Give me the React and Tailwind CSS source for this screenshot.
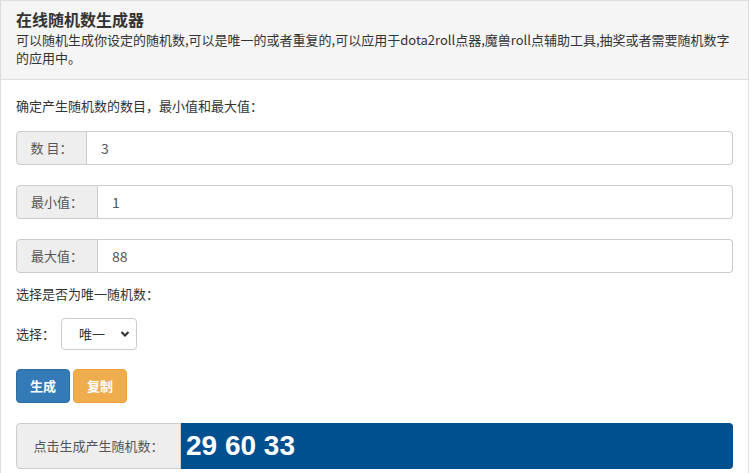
import React, { useState } from 'react';

const font = { fontFamily: '"Noto Sans CJK SC", "Noto Sans", sans-serif' };

function InputRow({ label, value, addonW }) {
  return (
    <div className="flex h-[34px] text-[13px]">
      <span className={`${addonW} flex items-center justify-center rounded-l border border-[#cccccc] bg-[#eeeeee] text-[#555555]`}>{label}</span>
      <input
        defaultValue={value}
        className="flex-1 rounded-r border border-l-0 border-[#cccccc] px-[14px] text-[14px] text-[#555555] outline-none"
        style={font}
      />
    </div>
  );
}

export default function App() {
  const [result] = useState('29 60 33');
  return (
    <div className="h-[473px] w-[749px] overflow-hidden border border-b-0 border-[#dddddd] bg-white text-[#333333]" style={font}>
      <div className="h-[79px] border-b border-[#dddddd] bg-[#f5f5f5] px-[15px] pt-[6px]">
        <h1 className="text-[16px] font-bold leading-[24px] text-[#333333]">在线随机数生成器</h1>
        <p className="text-[13px] leading-[18px] text-[#333333]">
          可以随机生成你设定的随机数,可以是唯一的或者重复的,可以应用于dota2roll点器,魔兽roll点辅助工具,抽奖或者需要随机数字的应用中。
        </p>
      </div>
      <div className="px-[15px] pt-[16px]">
        <p className="text-[13px] leading-[20px]">确定产生随机数的数目，最小值和最大值：</p>
        <div className="mt-[15px] flex flex-col gap-[20px]">
          <InputRow label="数 目：" value="3" addonW="w-[71px]" />
          <InputRow label="最小值：" value="1" addonW="w-[82px]" />
          <InputRow label="最大值：" value="88" addonW="w-[82px]" />
        </div>
        <p className="mt-[11px] text-[13px] leading-[20px]">选择是否为唯一随机数：</p>
        <div className="mt-[14px] flex items-center gap-[6px] text-[13px]">
          <span>选择：</span>
          <div className="relative flex h-[32px] w-[76px] items-center rounded border border-[#cccccc] pl-[17px]">
            <span>唯一</span>
            <svg className="absolute right-[6px] top-[11px]" width="10" height="8" viewBox="0 0 10 8">
              <path d="M1.5 2 L5 5.5 L8.5 2" fill="none" stroke="#333" strokeWidth="2.2" />
            </svg>
          </div>
        </div>
        <div className="mt-[19px] flex gap-[3px] text-[13px] font-semibold text-white">
          <button className="h-[34px] w-[54px] rounded border border-[#2e6da4] bg-[#337ab7]" style={font}>生成</button>
          <button className="h-[34px] w-[54px] rounded border border-[#eea236] bg-[#f0ad4e]" style={font}>复制</button>
        </div>
        <div className="mt-[20px] flex h-[46px]">
          <span className="flex w-[165px] items-center justify-center rounded-l border border-[#cccccc] bg-[#eeeeee] text-[13px] text-[#555555]">点击生成产生随机数：</span>
          <div className="flex flex-1 items-center rounded-r bg-[#00508f] pl-[5px] text-[28px] font-bold text-white" style={{ fontFamily: '"Liberation Sans", Arial, sans-serif' }}>
            {result}
          </div>
        </div>
      </div>
    </div>
  );
}
